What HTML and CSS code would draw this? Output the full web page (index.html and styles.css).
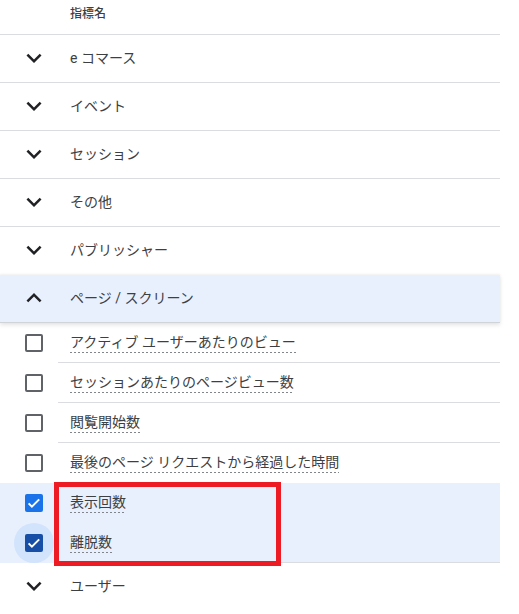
FILE: index.html
```html
<!DOCTYPE html>
<html lang="ja">
<head>
<meta charset="utf-8">
<link rel="stylesheet" href="styles.css">
</head>
<body>
<div class="panel">
  <div class="head">指標名</div>

  <div class="group">
    <span class="ico"><svg viewBox="0 0 24 24" width="30" height="30"><path d="M16.59 8.59L12 13.17 7.41 8.59 6 10l6 6 6-6z"/></svg></span>
    <span class="label">e コマース</span>
  </div>
  <div class="group">
    <span class="ico"><svg viewBox="0 0 24 24" width="30" height="30"><path d="M16.59 8.59L12 13.17 7.41 8.59 6 10l6 6 6-6z"/></svg></span>
    <span class="label">イベント</span>
  </div>
  <div class="group">
    <span class="ico"><svg viewBox="0 0 24 24" width="30" height="30"><path d="M16.59 8.59L12 13.17 7.41 8.59 6 10l6 6 6-6z"/></svg></span>
    <span class="label">セッション</span>
  </div>
  <div class="group">
    <span class="ico"><svg viewBox="0 0 24 24" width="30" height="30"><path d="M16.59 8.59L12 13.17 7.41 8.59 6 10l6 6 6-6z"/></svg></span>
    <span class="label">その他</span>
  </div>
  <div class="group no-line">
    <span class="ico"><svg viewBox="0 0 24 24" width="30" height="30"><path d="M16.59 8.59L12 13.17 7.41 8.59 6 10l6 6 6-6z"/></svg></span>
    <span class="label">パブリッシャー</span>
  </div>
  <div class="group open">
    <span class="ico"><svg viewBox="0 0 24 24" width="30" height="30"><path d="M12 8l-6 6 1.41 1.41L12 10.83l4.59 4.58L18 14z"/></svg></span>
    <span class="label">ページ / スクリーン</span>
  </div>

  <div class="items">
    <div class="item">
      <span class="cbcell"><span class="cb"></span></span>
      <span class="body"><span class="name">アクティブ ユーザーあたりのビュー</span></span>
    </div>
    <div class="item">
      <span class="cbcell"><span class="cb"></span></span>
      <span class="body"><span class="name">セッションあたりのページビュー数</span></span>
    </div>
    <div class="item">
      <span class="cbcell"><span class="cb"></span></span>
      <span class="body"><span class="name">閲覧開始数</span></span>
    </div>
    <div class="item no-line">
      <span class="cbcell"><span class="cb"></span></span>
      <span class="body"><span class="name">最後のページ リクエストから経過した時間</span></span>
    </div>
    <div class="sel">
      <div class="item no-line">
        <span class="cbcell"><span class="cb on"><svg viewBox="0 0 18 18" width="18" height="18"><path d="M3.6 9.4l3.3 3.3 7.3-7.3"/></svg></span></span>
        <span class="body"><span class="name">表示回数</span></span>
      </div>
      <div class="item">
        <span class="cbcell focus"><span class="cb on dark"><svg viewBox="0 0 18 18" width="18" height="18"><path d="M3.6 9.4l3.3 3.3 7.3-7.3"/></svg></span></span>
        <span class="body"><span class="name">離脱数</span></span>
      </div>
      <div class="redbox"></div>
    </div>
  </div>

  <div class="group no-line">
    <span class="ico"><svg viewBox="0 0 24 24" width="30" height="30"><path d="M16.59 8.59L12 13.17 7.41 8.59 6 10l6 6 6-6z"/></svg></span>
    <span class="label">ユーザー</span>
  </div>
</div>
</body>
</html>
```

FILE: styles.css
```css
* { box-sizing: border-box; }
html, body { margin: 0; padding: 0; background: #fff; }
body {
  font-family: "Roboto", "Noto Sans CJK JP", sans-serif;
  color: #3c4043;
}
.panel { width: 500px; }

.head {
  height: 35px;
  padding: 6px 0 0 70px;
  font-size: 12px;
  line-height: 16px;
  font-weight: 500;
  color: #3c4043;
  border-bottom: 1px solid #dadce0;
}

.group {
  display: flex;
  align-items: center;
  height: 48px;
  padding-bottom: 1px;
  border-bottom: 1px solid #dadce0;
  font-size: 14px;
  background: #fff;
}
.group.no-line { border-bottom-color: transparent; }
.group .ico {
  width: 70px;
  padding-left: 19px;
  display: flex;
  align-items: center;
}
.group .ico svg { fill: #202124; display: block; }
.group .label { line-height: 20px; }

.group.open {
  position: relative;
  z-index: 1;
  background: #e8f0fe;
  border-bottom: 1px solid #d0d3d8;
  box-shadow: 0 2px 4px rgba(60,64,67,.15), 0 -1px 2px rgba(60,64,67,.06);
}

.items { font-size: 14px; }
.item {
  display: flex;
  height: 40px;
}
.cbcell {
  position: relative;
  width: 58px;
  padding-left: 25px;
  display: flex;
  align-items: center;
}
.cbcell.focus::before {
  content: "";
  position: absolute;
  left: 14px;
  top: 0;
  width: 40px;
  height: 40px;
  border-radius: 50%;
  background: #d2e3fc;
}
.cb {
  position: relative;
  width: 18px;
  height: 18px;
  border: 2px solid #5f6368;
  border-radius: 2px;
  display: block;
}
.cb.on {
  border: none;
  background: #1a73e8;
}
.cb.on.dark { background: #174ea6; }
.cb.on svg {
  display: block;
  fill: none;
  stroke: #fff;
  stroke-width: 2;
}

.body {
  flex: 1;
  display: flex;
  align-items: center;
  padding-left: 12px;
  border-bottom: 1px solid #dadce0;
}
.item.no-line .body { border-bottom-color: transparent; }
.name {
  line-height: 20px;
  padding-bottom: 1px;
  background-image: repeating-linear-gradient(to right, #80868b 0 2px, transparent 2px 4px);
  background-size: 100% 1px;
  background-repeat: no-repeat;
  background-position: left bottom;
}

.sel {
  position: relative;
  background: #e8f0fe;
}
.redbox {
  position: absolute;
  left: 54px;
  top: -1px;
  width: 227px;
  height: 84px;
  border: 5px solid #ed1c24;
}
```
